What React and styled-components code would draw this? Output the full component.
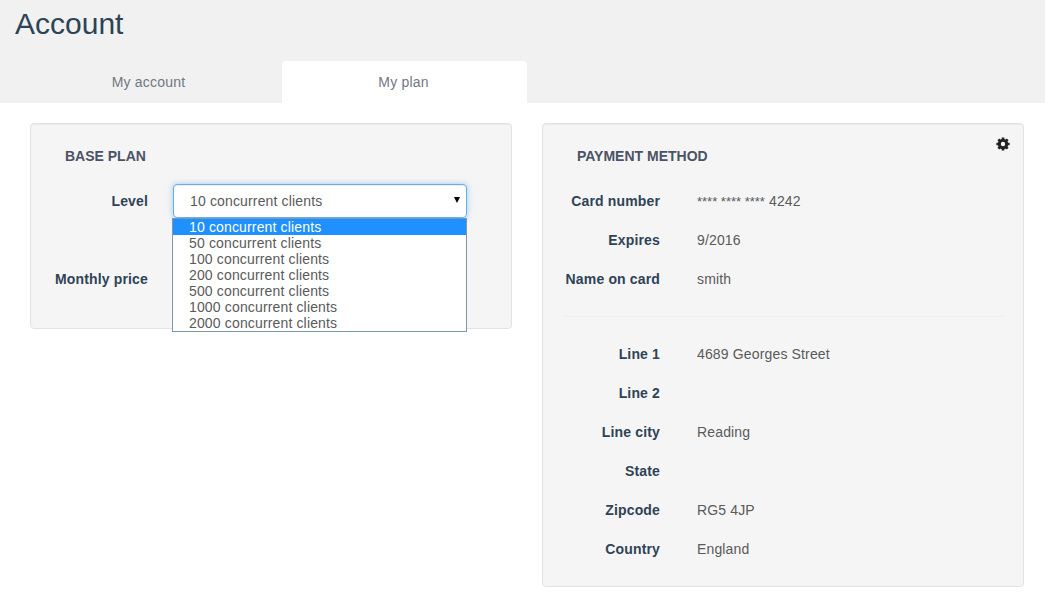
import styled, { createGlobalStyle } from "styled-components";

const GlobalStyle = createGlobalStyle`
  html, body {
    margin: 0;
    padding: 0;
    background: #fff;
    font-family: "Liberation Sans", Arial, sans-serif;
  }
`;

const Header = styled.header`
  height: 103px;
  background: #f1f1f1;
  display: flex;
  flex-direction: column;
  justify-content: space-between;
`;

const PageTitle = styled.h1`
  margin: 0;
  padding: 7px 0 0 15px;
  font-size: 30px;
  line-height: 33px;
  font-weight: 400;
  color: #2c4454;
`;

const Tabs = styled.nav`
  display: flex;
  gap: 10px;
  padding-left: 27px;
`;

const Tab = styled.div`
  box-sizing: border-box;
  width: 245px;
  height: 42px;
  padding-right: 2px;
  line-height: 42px;
  text-align: center;
  font-size: 14px;
  letter-spacing: 0.2px;
  color: #6f7880;
  border-radius: 4px 4px 0 0;
  background: ${(p) => (p.$active ? "#fff" : "transparent")};
`;

const Content = styled.main`
  display: grid;
  grid-template-columns: 482px 482px;
  gap: 30px;
  align-items: start;
  padding: 20px 0 0 30px;
`;

const Panel = styled.section`
  position: relative;
  box-sizing: border-box;
  height: ${(p) => p.$height}px;
  background: #f5f5f5;
  border: 1px solid #e3e3e3;
  border-radius: 4px;
  box-shadow: inset 0 1px 1px rgba(0, 0, 0, 0.05);
  padding: 25px 19px 0 21px;
`;

const PanelTitle = styled.h2`
  margin: 0 0 17px 13px;
  font-size: 14px;
  line-height: 15px;
  font-weight: 700;
  color: #4a5366;
`;

const Row = styled.div`
  display: flex;
  align-items: center;
  height: ${(p) => p.$height || 39}px;
  font-size: 14px;
`;

const Label = styled.div`
  width: ${(p) => p.$width}px;
  flex: none;
  text-align: right;
  font-weight: 700;
  letter-spacing: 0.15px;
  color: #2f4356;
`;

const Value = styled.div`
  margin-left: 37px;
  color: #5a5a5a;
  letter-spacing: 0.15px;
`;

const Stars = styled.span`
  font-size: 13px;
  letter-spacing: 0;
`;

const Divider = styled.hr`
  margin: 18px 0 17px 0;
  border: none;
  border-top: 1px solid #eeeeee;
`;

const SelectWrap = styled.div`
  position: relative;
  margin-left: 25px;
  width: 294px;
`;

const SelectBox = styled.div`
  box-sizing: border-box;
  height: 34px;
  line-height: 32px;
  padding-left: 16px;
  background: #fff;
  border: 1px solid #66afe9;
  border-radius: 4px;
  box-shadow: inset 0 1px 1px rgba(0, 0, 0, 0.075), 0 0 6px rgba(102, 175, 233, 0.6);
  color: #5a5a5a;
  letter-spacing: 0.15px;
`;

const Arrow = styled.span`
  position: absolute;
  right: 7px;
  top: 13px;
  border-left: 3px solid transparent;
  border-right: 3px solid transparent;
  border-top: 6px solid #000;
`;

const Dropdown = styled.ul`
  position: absolute;
  z-index: 2;
  left: -1px;
  top: 34px;
  width: 295px;
  box-sizing: border-box;
  margin: 0;
  padding: 0;
  list-style: none;
  background: #fff;
  border: 1px solid #7b98ad;
`;

const Option = styled.li`
  height: 16px;
  line-height: 16px;
  padding-left: 16px;
  letter-spacing: 0.15px;
  color: ${(p) => (p.$selected ? "#fff" : "#5a5a5a")};
  background: ${(p) => (p.$selected ? "#1e90ff" : "#fff")};
`;

const GearButton = styled.div`
  position: absolute;
  top: 13px;
  right: 13px;
  width: 14px;
  height: 14px;
  display: flex;
`;

const Gear = () => (
  <svg width="14" height="14" viewBox="0 0 14 14" stroke="#222" fill="none">
    <circle cx="7" cy="7" r="3.7" strokeWidth="3" />
    {[0, 45, 90, 135].map((deg) => (
      <line key={deg} x1="7" y1="0.4" x2="7" y2="13.6" strokeWidth="2.6" strokeDasharray="2.4 8.4 2.4" transform={`rotate(${deg} 7 7)`} />
    ))}
  </svg>
);

const levels = [10, 50, 100, 200, 500, 1000, 2000];

const cardRows = [
  ["Card number", <><Stars>**** **** ****</Stars> 4242</>],
  ["Expires", "9/2016"],
  ["Name on card", "smith"],
];

const addressRows = [
  ["Line 1", "4689 Georges Street"],
  ["Line 2", ""],
  ["Line city", "Reading"],
  ["State", ""],
  ["Zipcode", "RG5 4JP"],
  ["Country", "England"],
];

const App = () => {
  return (
    <>
      <GlobalStyle />
      <Header>
        <PageTitle>Account</PageTitle>
        <Tabs>
          <Tab>My account</Tab>
          <Tab $active>My plan</Tab>
        </Tabs>
      </Header>
      <Content>
        <Panel $height={206}>
          <PanelTitle>BASE PLAN</PanelTitle>
          <Row $height={39}>
            <Label $width={96}>Level</Label>
            <SelectWrap>
              <SelectBox>10 concurrent clients</SelectBox>
              <Arrow />
              <Dropdown>
                {levels.map((n, i) => (
                  <Option key={n} $selected={i === 0}>
                    {n} concurrent clients
                  </Option>
                ))}
              </Dropdown>
            </SelectWrap>
          </Row>
          <Row $height={39} />
          <Row $height={39}>
            <Label $width={96}>Monthly price</Label>
          </Row>
        </Panel>
        <Panel $height={464}>
          <GearButton>
            <Gear />
          </GearButton>
          <PanelTitle>PAYMENT METHOD</PanelTitle>
          {cardRows.map(([label, value]) => (
            <Row key={label}>
              <Label $width={96}>{label}</Label>
              <Value>{value}</Value>
            </Row>
          ))}
          <Divider />
          {addressRows.map(([label, value]) => (
            <Row key={label}>
              <Label $width={96}>{label}</Label>
              <Value>{value}</Value>
            </Row>
          ))}
        </Panel>
      </Content>
    </>
  );
};

export default App;
